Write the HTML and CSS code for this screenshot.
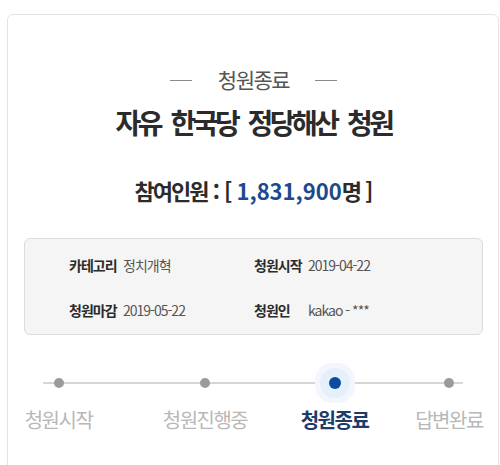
FILE: index.html
```html
<!DOCTYPE html>
<html lang="ko">
<head>
<meta charset="utf-8">
<title>청원종료</title>
<link rel="stylesheet" href="styles.css">
</head>
<body>
<div class="card">
  <div class="status"><span class="dash"></span><span class="status-text">청원종료</span><span class="dash"></span></div>
  <h1 class="title">자유 한국당 정당해산 청원</h1>
  <p class="count"><span class="count-ko">참여인원</span><span class="count-sep"> : [ </span><span class="count-num">1,831,900</span><span class="count-ko">명</span><span class="count-sep"> ]</span></p>
  <div class="info">
    <div class="info-item"><span class="info-label">카테고리</span><span class="info-value">정치개혁</span></div>
    <div class="info-item"><span class="info-label">청원시작</span><span class="info-value">2019-04-22</span></div>
    <div class="info-item"><span class="info-label">청원마감</span><span class="info-value">2019-05-22</span></div>
    <div class="info-item"><span class="info-label">청원인</span><span class="info-value">kakao - ***</span></div>
  </div>
  <div class="steps">
    <div class="step step-1"><span class="dot"></span><span class="step-label">청원시작</span></div>
    <div class="step step-2"><span class="dot"></span><span class="step-label">청원진행중</span></div>
    <div class="step step-3 active"><span class="dot"></span><span class="step-label">청원종료</span></div>
    <div class="step step-4"><span class="dot"></span><span class="step-label">답변완료</span></div>
  </div>
</div>
</body>
</html>
```

FILE: styles.css
```css
* { box-sizing: border-box; }
html, body { margin: 0; padding: 0; background: #fff; }
body {
  font-family: "Noto Sans CJK KR", "Noto Sans", sans-serif;
  color: #2b2b2b;
  width: 500px;
  height: 465px;
  overflow: hidden;
}
.card {
  margin: 14px 1px 0 7px;
  border: 1px solid #e3e3e3;
  border-radius: 6px;
  min-height: 520px;
  padding: 49px 15px 0 16px;
  background: #fff;
}
.status {
  display: flex;
  justify-content: center;
  align-items: center;
  height: 30px;
}
.dash {
  display: inline-block;
  width: 22px;
  height: 1px;
  background: #8a8a8a;
  margin: 0 26px;
  position: relative;
  top: 1px;
}
.status-text {
  font-size: 21px;
  letter-spacing: -1.5px;
  color: #555;
  font-weight: 400;
}
.title {
  margin: 10px 0 0;
  text-align: center;
  font-size: 28px;
  line-height: 36px;
  font-weight: 700;
  letter-spacing: -3.5px;
  word-spacing: 6px;
  color: #2b2b2b;
}
.count {
  margin: 35px 0 0;
  text-align: center;
  font-size: 22px;
  line-height: 30px;
  font-weight: 700;
  color: #2b2b2b;
}
.count-ko { letter-spacing: -2px; }
.count-sep { letter-spacing: -1px; }
.count-num { color: #1d4a8c; letter-spacing: 0; }
.info {
  margin-top: 33px;
  background: #f5f5f5;
  border: 1px solid #dcdcdc;
  border-radius: 6px;
  padding: 16px 10px 14px 44px;
  display: grid;
  grid-template-columns: 185px 1fr;
  row-gap: 25px;
}
.info-item {
  font-size: 14px;
  line-height: 20px;
  letter-spacing: -1px;
  white-space: nowrap;
}
.info-label {
  display: inline-block;
  width: 54px;
  font-weight: 700;
  color: #2b2b2b;
}
.info-value {
  color: #555;
}
.steps {
  position: relative;
  display: flex;
  margin-top: 32px;
}
.steps::before {
  content: "";
  position: absolute;
  left: 19px;
  right: 20px;
  top: 15px;
  height: 2px;
  background: #d6d6d6;
}
.step {
  position: relative;
  display: flex;
  flex-direction: column;
  align-items: center;
}
.step-1 { width: 69px; }
.step-2 { width: 86px; margin-left: 69px; }
.step-3 { width: 69px; margin-left: 52px; }
.step-4 { width: 68px; margin-left: 46px; }
.dot {
  width: 10px;
  height: 10px;
  margin: 11px 0;
  border-radius: 50%;
  background: #9b9b9b;
}
.active .dot {
  width: 12px;
  height: 12px;
  margin: 10px 0;
  background: #0b4c9f;
  box-shadow: 0 0 0 9px #e6f0fb, 0 0 0 14px #f3f7fd;
}
.step-label {
  margin-top: 9px;
  font-size: 20px;
  line-height: 24px;
  letter-spacing: -1.5px;
  color: #b8b8b8;
  white-space: nowrap;
}
.active .step-label {
  color: #1d3c6a;
  font-weight: 700;
}
```
